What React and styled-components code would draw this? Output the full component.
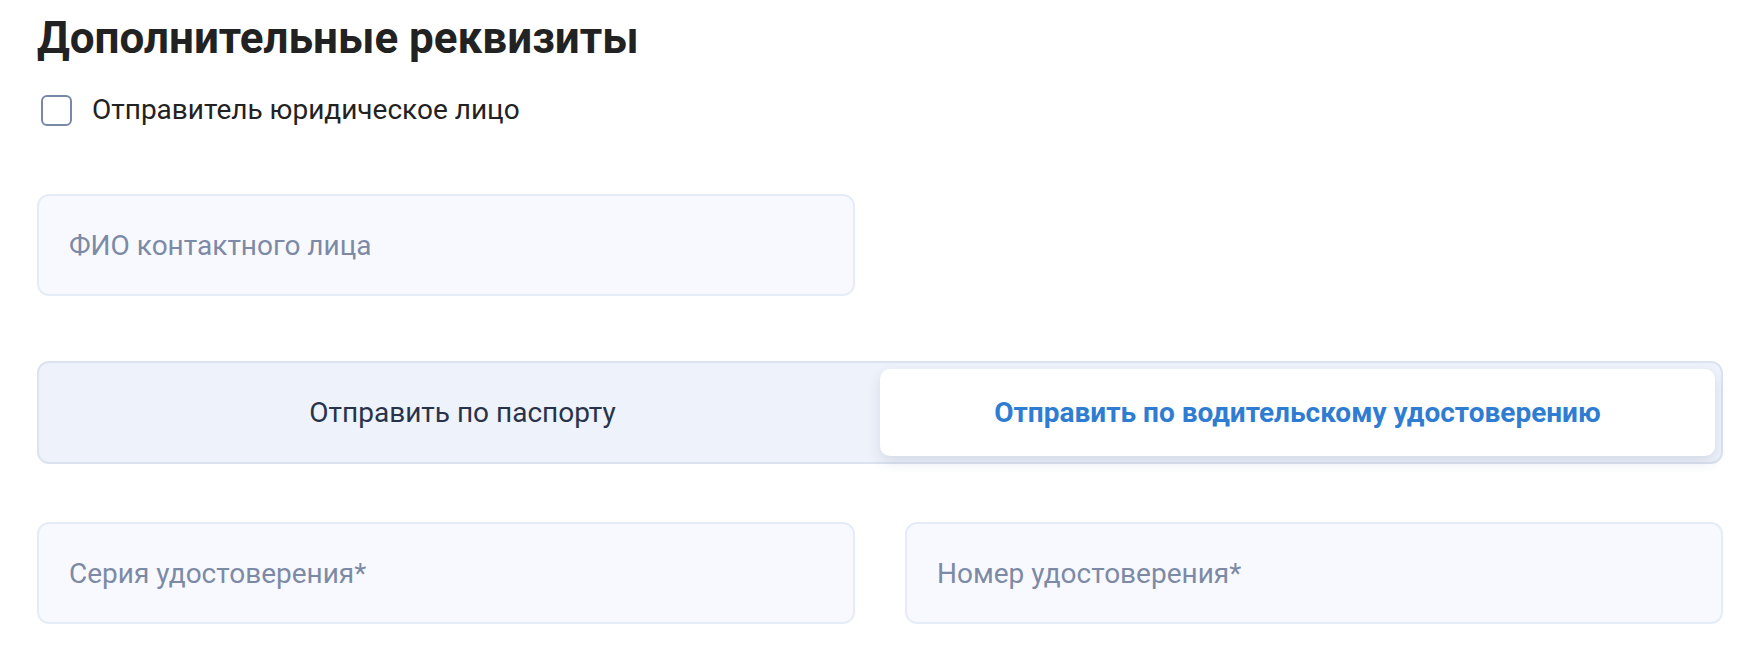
import React, { useState } from "react";
import styled, { createGlobalStyle } from "styled-components";

const GlobalStyle = createGlobalStyle`
  html, body { margin: 0; padding: 0; background: #ffffff; }
  body { font-family: Roboto, "Noto Sans", "Liberation Sans", sans-serif; }
  * { box-sizing: border-box; }
`;

const Page = styled.div`
  width: 1758px;
  padding: 12px 35px 0 37px;
  display: flex;
  flex-direction: column;
`;

const Title = styled.h2`
  margin: 0;
  font-size: 44px;
  line-height: 52px;
  font-weight: 700;
  color: #222222;
  letter-spacing: 0;
`;

const CheckRow = styled.label`
  margin-top: 30px;
  display: flex;
  align-items: center;
  gap: 20px;
  padding-left: 4px;
  cursor: pointer;
`;

const Box = styled.input`
  appearance: none;
  margin: 0;
  width: 31px;
  height: 31px;
  border: 2px solid #7a88a8;
  border-radius: 6px;
  background: #ffffff;
  flex: none;
`;

const CheckText = styled.span`
  font-size: 28px;
  line-height: 32px;
  color: #222222;
`;

const Field = styled.input`
  display: block;
  width: 818px;
  height: 102px;
  margin: 0;
  padding: 0 30px;
  border: 2px solid #e6ecf7;
  border-radius: 12px;
  background: #f8f9fe;
  font-family: inherit;
  font-size: 28px;
  color: #222;
  outline: none;
  &::placeholder { color: #7d8aa6; }
`;

const Single = styled.div`
  margin-top: 68px;
`;

const Toggle = styled.div`
  margin-top: 65px;
  width: 1686px;
  height: 103px;
  padding: 6px 6px;
  border: 2px solid #dce2ee;
  border-radius: 12px;
  background: #eef2fa;
  display: grid;
  grid-template-columns: 1fr 1fr;
`;

const Tab = styled.button`
  border: none;
  margin: 0;
  border-radius: 10px;
  font-family: inherit;
  font-size: 28px;
  cursor: pointer;
  background: ${(p) => (p.$active ? "#ffffff" : "transparent")};
  color: ${(p) => (p.$active ? "#2f7dd3" : "#28334a")};
  font-weight: ${(p) => (p.$active ? 700 : 400)};
  box-shadow: ${(p) => (p.$active ? "0 6px 14px rgba(40, 60, 110, 0.13)" : "none")};
`;

const Row = styled.div`
  margin-top: 58px;
  width: 1686px;
  display: grid;
  grid-template-columns: 818px 818px;
  column-gap: 50px;
`;

export default function App() {
  const [mode, setMode] = useState("license");
  return (
    <>
      <GlobalStyle />
      <Page>
        <Title>Дополнительные реквизиты</Title>
        <CheckRow>
          <Box type="checkbox" />
          <CheckText>Отправитель юридическое лицо</CheckText>
        </CheckRow>
        <Single>
          <Field placeholder="ФИО контактного лица" />
        </Single>
        <Toggle>
          <Tab $active={mode === "passport"} onClick={() => setMode("passport")}>
            Отправить по паспорту
          </Tab>
          <Tab $active={mode === "license"} onClick={() => setMode("license")}>
            Отправить по водительскому удостоверению
          </Tab>
        </Toggle>
        <Row>
          <Field placeholder="Серия удостоверения*" />
          <Field placeholder="Номер удостоверения*" />
        </Row>
      </Page>
    </>
  );
}
